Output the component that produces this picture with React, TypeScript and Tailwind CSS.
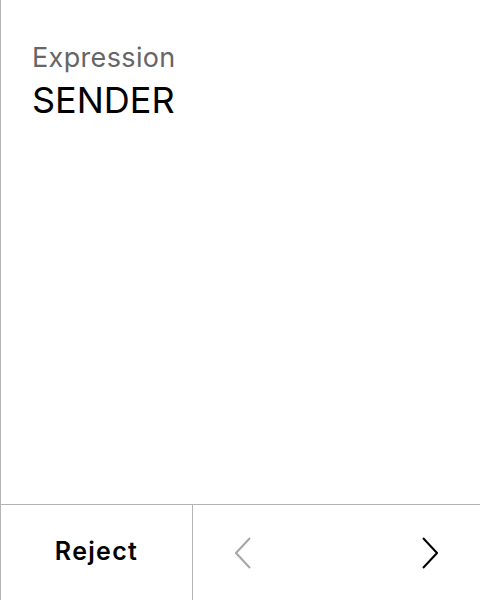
export default function App() {
  return (
    <div
      className="flex h-[600px] w-[480px] flex-col border-l border-[#b3b3b3] bg-white"
      style={{ fontFamily: "Inter, 'Noto Sans', sans-serif" }}
    >
      <div className="flex-1 pl-[31px] pt-[40px]">
        <div className="text-[27px] leading-[35px] tracking-[0.35px] text-[#666666]">Expression</div>
        <div className="mt-[3px] text-[36px] leading-[44px] text-black">SENDER</div>
      </div>
      <div className="flex h-[96px] border-t border-[#b3b3b3]">
        <button className="flex w-[192px] items-center justify-center border-r border-[#b3b3b3] pb-[1px] text-[25px] font-semibold tracking-[1.3px] text-black">
          Reject
        </button>
        <div className="flex flex-1 items-center justify-between px-[42px]">
          <svg width="16" height="32" viewBox="0 0 16 32" fill="none">
            <path d="M15 1L1 16L15 31" stroke="#a6a6a6" strokeWidth="2" />
          </svg>
          <svg width="16" height="32" viewBox="0 0 16 32" fill="none">
            <path d="M1 1L15 16L1 31" stroke="#000000" strokeWidth="2" />
          </svg>
        </div>
      </div>
    </div>
  );
}
